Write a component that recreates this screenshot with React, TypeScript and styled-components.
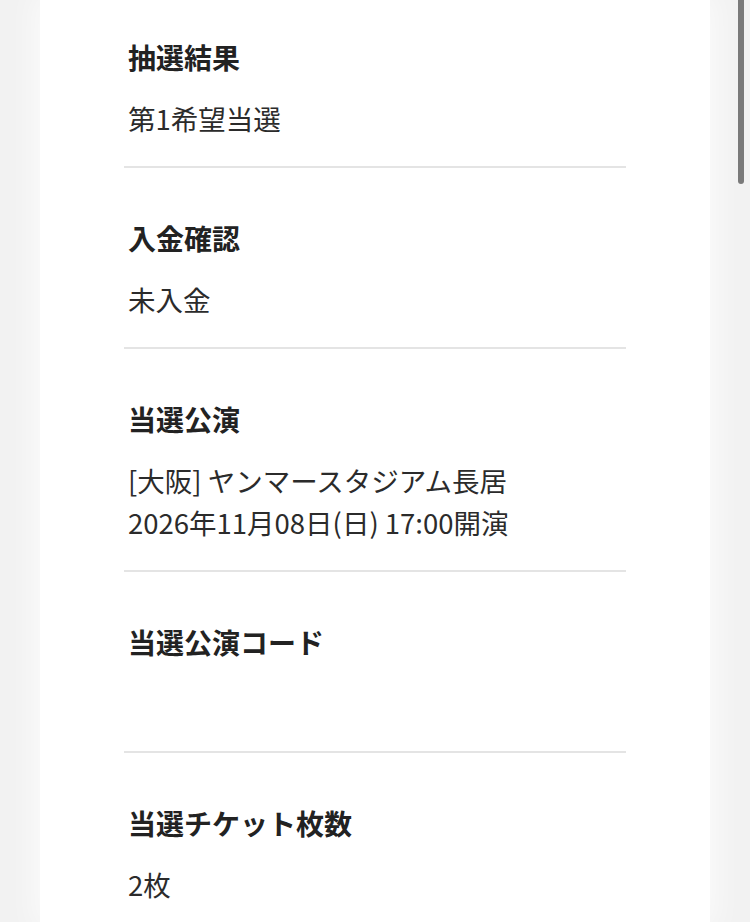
import styled, { createGlobalStyle } from 'styled-components';

type Item = {
    label: string;
    lines: string[];
};

const items: Item[] = [
    { label: '抽選結果', lines: ['第1希望当選'] },
    { label: '入金確認', lines: ['未入金'] },
    { label: '当選公演', lines: ['[大阪] ヤンマースタジアム長居', '2026年11月08日(日) 17:00開演'] },
    { label: '当選公演コード', lines: [] },
    { label: '当選チケット枚数', lines: ['2枚'] },
];

export default function App() {
    return (
        <>
            <GlobalStyle />
            <Page>
                <Card>
                    <List>
                        {items.map((item) => (
                            <Row key={item.label}>
                                <Label>{item.label}</Label>
                                <Value>
                                    {item.lines.length === 0 ? <Line>&nbsp;</Line> : item.lines.map((l) => <Line key={l}>{l}</Line>)}
                                </Value>
                            </Row>
                        ))}
                    </List>
                </Card>
                <ScrollThumb />
            </Page>
        </>
    );
}

const GlobalStyle = createGlobalStyle`
    html, body {
        margin: 0;
        padding: 0;
        background: #f1f1f1;
        overflow: hidden;
    }
    body {
        font-family: "Noto Sans CJK JP", "Noto Sans", sans-serif;
        -webkit-font-smoothing: antialiased;
    }
`;

const Page = styled.div`
    position: relative;
    height: 922px;
    overflow: hidden;
    padding: 0 40px;
    background: #f2f2f2;
`;

const Card = styled.div`
    background: #ffffff;
    height: 100%;
    padding: 0 84px;
    box-shadow: 0 0 28px 6px rgba(255, 255, 255, 0.7);
`;

const List = styled.div`
    display: flex;
    flex-direction: column;
`;

const Row = styled.div`
    padding: 48px 0 27px;
    border-bottom: 2px solid #e4e4e4;

    &:first-child {
        padding-top: 35px;
    }
`;

const Label = styled.div`
    font-size: 28px;
    line-height: 44px;
    font-weight: 700;
    color: #222222;
    padding-left: 4px;
`;

const Value = styled.div`
    margin-top: 18px;
    padding-left: 4px;
`;

const Line = styled.div`
    font-size: 27.5px;
    line-height: 42px;
    font-weight: 400;
    color: #2b2b2b;
`;

const ScrollThumb = styled.div`
    position: absolute;
    top: -4px;
    right: 6px;
    width: 6px;
    height: 188px;
    border-radius: 3px;
    background: #7a7a7a;
`;
